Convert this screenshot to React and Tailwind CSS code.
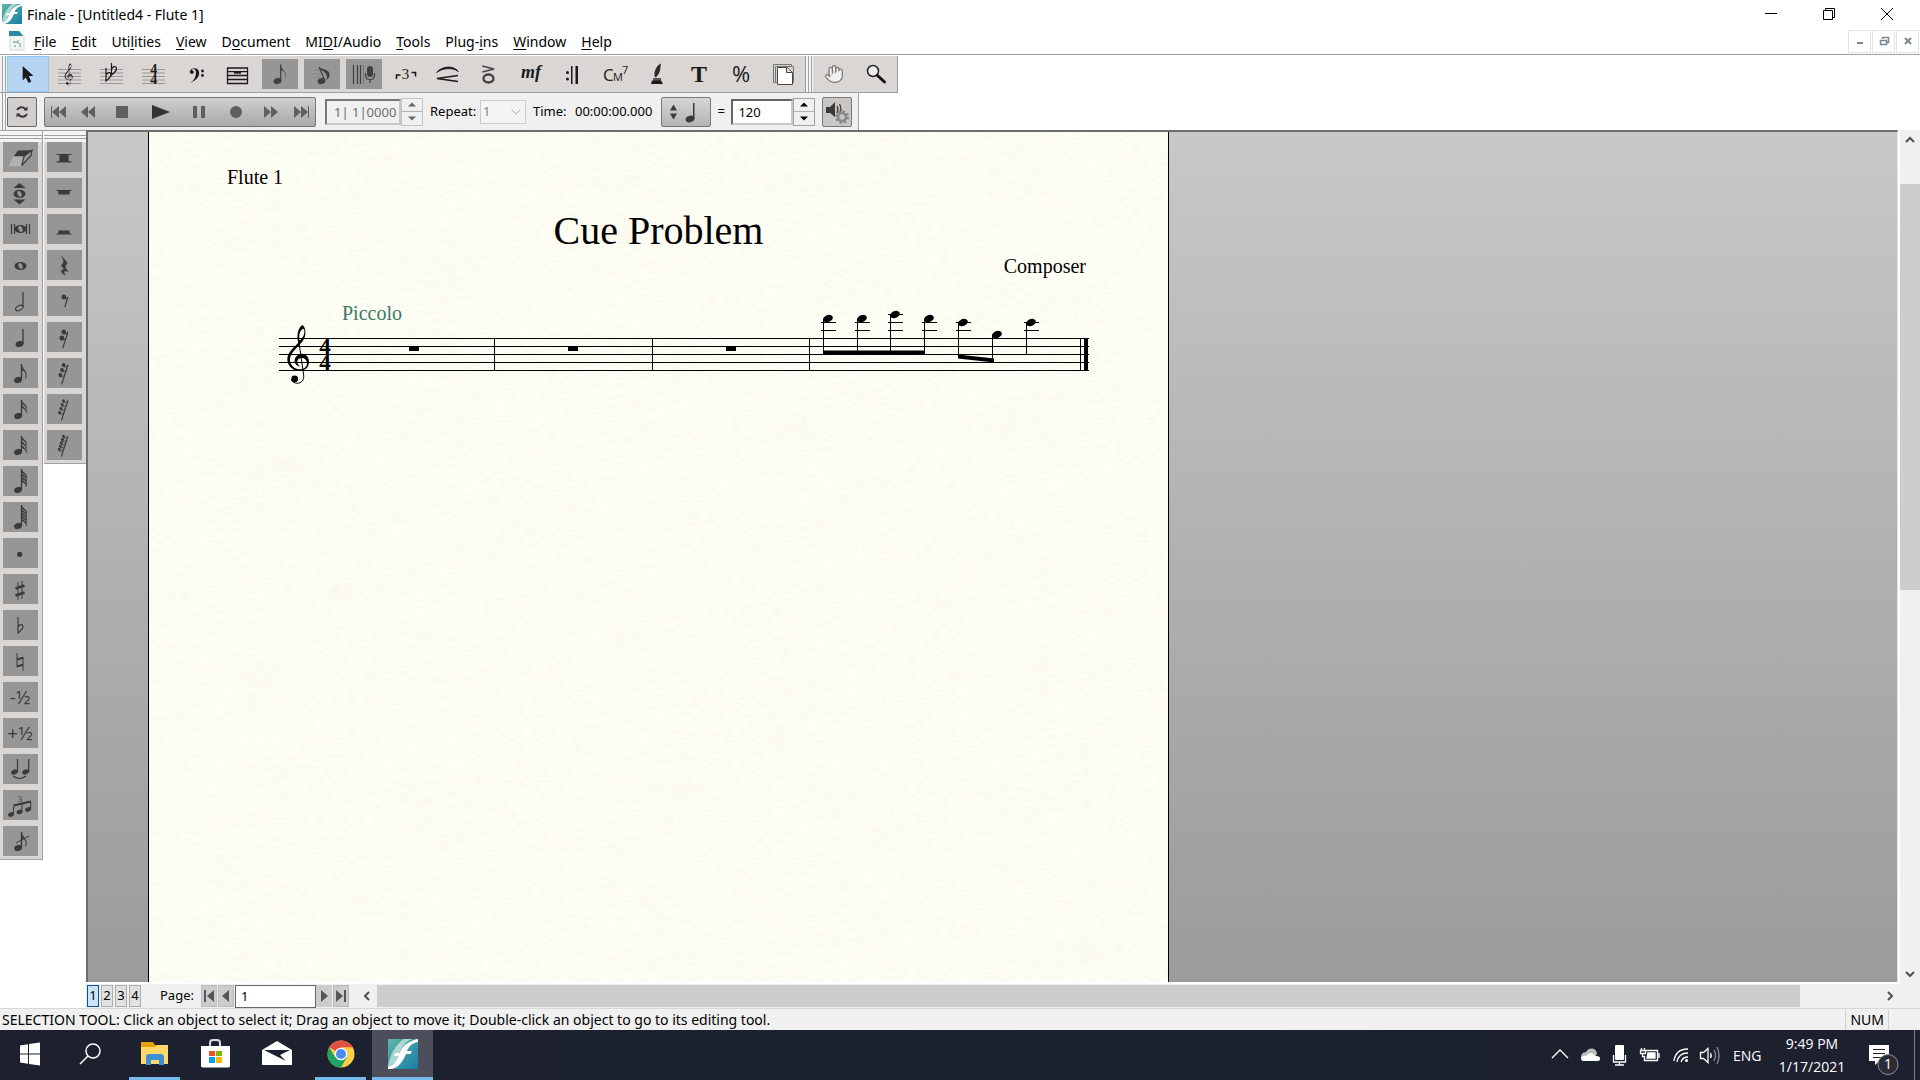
import React, { useState } from 'react';
import { Hand } from 'lucide-react';

const MENUS = [
  ['', 'F', 'ile'],
  ['', 'E', 'dit'],
  ['Uti', 'l', 'ities'],
  ['', 'V', 'iew'],
  ['D', 'o', 'cument'],
  ['MI', 'D', 'I/Audio'],
  ['', 'T', 'ools'],
  ['Plug-', 'i', 'ns'],
  ['', 'W', 'indow'],
  ['', 'H', 'elp'],
];

/* ---------- music symbols ---------- */

const Clef = ({ transform }) => (
  <g transform={transform}>
    <path
      fillRule="evenodd"
      fill="currentColor"
      d="M97 15C106 20 109 40 104 52C99 68 80 82 69 96C58 109 58 124 64 134C70 144 80 149 92 148C106 147 112 138 111 128C110 118 102 113 94 114C84 115 80 124 83 131C85 136 88 138 91 140C80 138 73 131 74 121C75 110 84 101 96 101C110 102 118 113 117 128C116 144 104 153 88 153C68 152 52 138 52 118C52 98 70 84 85 68C80 50 82 25 97 15ZM98 27C90 32 86 44 89 62C98 54 105 42 103 32C102 27 100 25 98 27Z"
    />
    <path d="M86 60L101 165C103 180 95 190 82 190C74 190 66 186 65 178" fill="none" stroke="currentColor" strokeWidth="3" />
    <circle cx="74" cy="177" r="10" fill="currentColor" />
  </g>
);

const Head = ({ x, y, rx = 4, ry = 3 }) => (
  <ellipse cx={x} cy={y} rx={rx} ry={ry} fill="currentColor" transform={`rotate(-20 ${x} ${y})`} />
);

const Whole = ({ x, y }) => (
  <g>
    <ellipse cx={x} cy={y} rx="6" ry="4" fill="currentColor" />
    <ellipse cx={x} cy={y} rx="2" ry="3" fill="#969696" transform={`rotate(-25 ${x} ${y})`} />
  </g>
);

const Flagged = ({ flags }) => {
  const top = flags > 3 ? 3 : 6;
  const step = flags > 3 ? 3 : 4;
  return (
    <g>
      <Head x={15} y={flags > 3 ? 24 : 22} />
      <path d={`M18.5 ${top}V${flags > 3 ? 24 : 22}`} stroke="currentColor" strokeWidth="1.3" />
      {[...Array(flags)].map((_, i) => (
        <path
          key={i}
          d={
            flags === 1
              ? 'M18.5 6C19 12 26 13 22.5 21C24 14 21 13 18.5 12Z'
              : `M18.5 ${top + i * step}c1 4 6 4 5 9c-1 -4 -3 -4 -5 -6Z`
          }
          fill="currentColor"
          stroke="currentColor"
          strokeWidth="0.4"
        />
      ))}
    </g>
  );
};

const HookRest = ({ hooks }) => {
  const top = hooks === 1 ? 11 : hooks === 2 ? 10 : 8 - hooks / 3;
  const step = hooks > 2 ? 18 / (hooks + 0.6) : 6;
  const r = hooks > 3 ? 1.5 : hooks === 3 ? 1.9 : 2.4;
  const end = hooks === 1 ? 21 : hooks === 2 ? 26 : 26.5;
  const slope = 0.33;
  return (
    <g stroke="currentColor" fill="none">
      <path d={`M21 ${top}L${21 - (end - top) * slope} ${end}`} strokeWidth="1.1" />
      {[...Array(hooks)].map((_, i) => {
        const y = top + i * step;
        const x = 21 - i * step * slope;
        return (
          <g key={i}>
            <circle cx={x - 5 + r / 3} cy={y} r={r} fill="currentColor" stroke="none" />
            <path d={`M${x - 5} ${y + 1.5}Q${x - 2} ${y + 3} ${x} ${y}`} strokeWidth="0.9" />
          </g>
        );
      })}
    </g>
  );
};

const FlatSign = ({ x, y, h = 16 }) => (
  <path
    d={`M${x} ${y}V${y + h}C${x + 4} ${y + h - 3} ${x + 6} ${y + h - 6} ${x + 4.5} ${y + h - 8}C${x + 3} ${y + h - 9} ${x + 1} ${y + h - 8} ${x} ${y + h - 6}`}
    fill="none"
    stroke="currentColor"
    strokeWidth="1.2"
  />
);

/* ---------- left palettes ---------- */

const NOTE_TOOLS = [
  ['Eraser', (
    <g>
      <path d="M6.5 23.7L10.7 14.3H21L18.7 23.7Z" fill="#b0b0b0" stroke="#bdbdbd" strokeWidth="0.6" />
      <path d="M15 8.5L29 8.2L21 14.3L10.7 14.3Z" fill="#3a3a3a" />
      <path d="M29 8.2L28 13.5L18.7 23.7L21 14.3Z" fill="#9a9a9a" stroke="#3a3a3a" strokeWidth="1.2" />
    </g>
  )],
  ['Change pitch', (
    <g>
      <path d="M16.5 5L22.5 10H10.5ZM10.5 21.5H22.5L16.5 26.5Z" fill="currentColor" />
      <Whole x={16.5} y={15.8} />
    </g>
  )],
  ['Double whole note', (
    <g>
      <path d="M8.5 10V20M11.5 10V20M23.5 10V20M26.5 10V20" stroke="currentColor" strokeWidth="1.2" />
      <Whole x={17.5} y={15} />
    </g>
  )],
  ['Whole note', <Whole x={17.5} y={16} />],
  ['Half note', (
    <g>
      <path d="M20 6V21" stroke="currentColor" strokeWidth="1.2" />
      <ellipse cx="16.3" cy="22" rx="4" ry="2.2" fill="none" stroke="currentColor" strokeWidth="1.1" transform="rotate(-28 16.3 22)" />
    </g>
  )],
  ['Quarter note', (
    <g>
      <path d="M20 7V22" stroke="currentColor" strokeWidth="1.3" />
      <Head x={16.5} y={22} />
    </g>
  )],
  ['Eighth note', <Flagged flags={1} />],
  ['16th note', <Flagged flags={2} />],
  ['32nd note', <Flagged flags={3} />],
  ['64th note', <Flagged flags={4} />],
  ['128th note', <Flagged flags={5} />],
  ['Dot', <circle cx="16.7" cy="16.3" r="2.6" fill="currentColor" />],
  ['Sharp', (
    <g stroke="currentColor">
      <path d="M15 8V26M19 7V25" strokeWidth="1" />
      <path d="M12.5 14.5L21.5 11.5M12.5 21.5L21.5 18.5" strokeWidth="2.4" />
    </g>
  )],
  ['Flat', <FlatSign x={15} y={7} h={16} />],
  ['Natural', (
    <g stroke="currentColor">
      <path d="M14 7V21M20 11V25" strokeWidth="1" />
      <path d="M14 13.5L20 11.8M14 20.5L20 18.8" strokeWidth="2.2" />
    </g>
  )],
  ['Half step down', <text x="17" y="22" textAnchor="middle" fontSize="19" fontFamily="Open Sans, sans-serif" fill="currentColor">-½</text>],
  ['Half step up', <text x="17" y="22" textAnchor="middle" fontSize="19" fontFamily="Open Sans, sans-serif" fill="currentColor">+½</text>],
  ['Tie', (
    <g>
      <Head x={11.5} y={18} rx={3.4} ry={2.5} />
      <Head x={22.5} y={18} rx={3.4} ry={2.5} />
      <path d="M14.5 5V18M25.7 5V18" stroke="currentColor" strokeWidth="1.2" />
      <path d="M10 22Q16.5 27 23 22" fill="none" stroke="currentColor" strokeWidth="1.2" />
    </g>
  )],
  ['Tuplet', (
    <g>
      <Head x={8} y={24.5} rx={3} ry={2.2} />
      <Head x={16.5} y={22} rx={3} ry={2.2} />
      <Head x={25} y={19.5} rx={3} ry={2.2} />
      <path d="M10.6 16V24M19 13.5V22M27.7 11V19" stroke="currentColor" strokeWidth="1" />
      <path d="M10.6 15.5L27.7 11.5" stroke="currentColor" strokeWidth="2" />
      <text x="17" y="11.5" textAnchor="middle" fontSize="9" fontFamily="Liberation Serif, serif" fill="currentColor">3</text>
    </g>
  )],
  ['Grace note', (
    <g>
      <Flagged flags={1} />
      <path d="M13 17L26 10" stroke="currentColor" strokeWidth="1" />
    </g>
  )],
];

const REST_TOOLS = [
  ['Double whole rest', <path d="M9.5 12.5H24.5M9.5 19.8H24.5M13 12.5H21V20H13Z" fill="currentColor" stroke="currentColor" strokeWidth="1.2" />],
  ['Whole rest', <path d="M9.5 12.5H24.5M12 12.5H22V16H12Z" fill="currentColor" stroke="currentColor" strokeWidth="1.2" />],
  ['Half rest', <path d="M9.5 20H24.5M12 17H22V20H12Z" fill="currentColor" stroke="currentColor" strokeWidth="1.2" />],
  ['Quarter rest', (
    <path d="M15 6.5L20.3 13C17.5 16 17.8 17.5 21 21.5C17 20 15.5 22 18.5 25C14 23.5 12.5 19.5 17.5 19.5L14.2 15.5C17.5 12.5 17 10.5 15 6.5Z" fill="currentColor" stroke="currentColor" strokeWidth="0.6" />
  )],
  ['Eighth rest', <HookRest hooks={1} />],
  ['16th rest', <HookRest hooks={2} />],
  ['32nd rest', <HookRest hooks={3} />],
  ['64th rest', <HookRest hooks={4} />],
  ['128th rest', <HookRest hooks={5} />],
];

const Palette = ({ tools, label }) => (
  <div className="flex w-[43px] shrink-0 flex-col border-r border-b border-[#a0a0a0] bg-[#dad6d3] pb-[3px]" aria-label={label} role="toolbar">
    <div className="flex h-[11px] flex-col justify-center gap-[2px] bg-[#f4f4f4]">
      <div className="h-px bg-[#a0a0a0]" />
      <div className="h-px bg-[#a0a0a0]" />
    </div>
    <div className="flex flex-col gap-[6px] px-[3px]">
      {tools.map(([name, icon]) => (
        <button key={name} aria-label={name} className="h-[30px] w-[35px] bg-[#969696] text-[#3a3a3a]">
          <svg width="35" height="30" viewBox="0 0 35 30">{icon}</svg>
        </button>
      ))}
    </div>
  </div>
);

/* ---------- main tool palette ---------- */

const StaffLines = () => (
  <path d="M9 13.5H32M9 17H32M9 20.5H32M9 24H32M9 27.5H32" stroke="#9a9896" strokeWidth="1" />
);

const MAIN_TOOLS = [
  ['Selection', <path d="M15.7 10V24.5L18.8 21.5L21.5 27L24.3 25.5L21.8 20.3L26.3 19.8Z" fill="#1a1a1a" />, 'selected'],
  ['Staff', <g><StaffLines /><Clef transform="translate(9.2 5.4) scale(0.124)" /></g>],
  ['Key signature', <g><StaffLines /><FlatSign x={15} y={12} h={13} /><FlatSign x={20.5} y={7} h={12} /></g>],
  ['Time signature', (
    <g fontFamily="Liberation Serif, serif" fontWeight="bold" fontSize="14" textAnchor="middle" fill="currentColor">
      <StaffLines />
      <text x="20.7" y="18">4</text>
      <text x="20.7" y="27.5">4</text>
    </g>
  )],
  ['Clef', (
    <g fill="currentColor">
      <path d="M15 27C22 24 25 20 24 15.5C23 11 16 11 14.8 15.5C14.5 18 18 19 18.7 16.5C19 14.5 17 14 16.5 14.5C18 11.8 21 13 21 16.5C21 21 19 24.5 15 27Z" />
      <circle cx="27.5" cy="15" r="1.4" />
      <circle cx="27.5" cy="19.5" r="1.4" />
    </g>
  )],
  ['Measure', (
    <g stroke="currentColor" fill="none">
      <path d="M10.5 12V27.5M30.5 12V27.5M10 12H31M10 15.7H31M10 19.5H31M10 23.5H31M10 27.5H31" strokeWidth="1.3" />
      <path d="M17 16.7H24" strokeWidth="2" />
    </g>
  )],
  ['Simple entry', (
    <g>
      <Head x={18.5} y={25} />
      <path d="M21.7 8.5V25" stroke="currentColor" strokeWidth="1.2" />
      <path d="M21.7 8.5C22 15 30 15 26 24C28 17 25 15 21.7 14Z" fill="currentColor" />
    </g>
  ), 'dark'],
  ['Speedy entry', (
    <g>
      <path d="M12 14.5H18M11 18H20M12 21.5H19" stroke="#878787" strokeWidth="1" />
      <Head x={20.5} y={25} />
      <path d="M23.7 24L18 11" stroke="currentColor" strokeWidth="1.2" />
      <path d="M18 11C22 14 28 13 28.500 18C29 21 27 23 25.500 24C27 20 25 16 19.500 14Z" fill="currentColor" />
    </g>
  ), 'dark'],
  ['HyperScribe', (
    <g>
      <path d="M10.5 9V28M14.5 9V28M17.5 9V28" stroke="currentColor" strokeWidth="1.2" />
      <path d="M20.5 9V28" stroke="#777" strokeWidth="1" />
      <rect x="24" y="10" width="6" height="11" rx="3" fill="currentColor" />
      <path d="M22.5 17V19C22.5 25 31.5 25 31.5 19V17M27 23V27" fill="none" stroke="currentColor" strokeWidth="1.2" />
    </g>
  ), 'dark'],
  ['Tuplet', (
    <g>
      <path d="M11.5 23V19H15.5M26.5 16.5H30.5V20.5" fill="none" stroke="currentColor" strokeWidth="1.6" />
      <text x="20.5" y="23" textAnchor="middle" fontSize="15" fontFamily="Liberation Serif, serif" fill="currentColor">3</text>
    </g>
  )],
  ['Smart shape', (
    <g fill="none" stroke="currentColor">
      <path d="M9.7 16.5C15 10 26 9 31.3 15.5C26 11 15 12 9.7 16.5Z" fill="currentColor" />
      <path d="M31 19.5L10 22.5L31 25.5" strokeWidth="1.5" />
    </g>
  )],
  ['Articulation', (
    <g fill="none" stroke="#444">
      <path d="M13.3 10L25 13L13.3 16" strokeWidth="1.5" />
      <ellipse cx="19.5" cy="22.5" rx="5" ry="4" strokeWidth="2.4" />
    </g>
  )],
  ['Expression', <text x="20" y="22" textAnchor="middle" fontSize="18" fontStyle="italic" fontWeight="bold" fontFamily="Liberation Serif, serif" fill="currentColor">mf</text>],
  ['Repeat', (
    <g fill="currentColor">
      <circle cx="14.5" cy="16.5" r="1.5" />
      <circle cx="14.5" cy="23" r="1.5" />
      <path d="M18 10H19.5V28H18ZM22.5 10H25V28H22.5Z" />
    </g>
  )],
  ['Chord', (
    <g fontFamily="Open Sans, sans-serif" fill="currentColor">
      <text x="8" y="25" fontSize="17">C</text>
      <text x="18" y="25" fontSize="11">M</text>
      <text x="27" y="18" fontSize="11">7</text>
    </g>
  )],
  ['Lyrics', (
    <g fill="currentColor">
      <path d="M18 21C16 16 20 9 24 7.5C23 12 24 14 21.5 18L19 21.5Z" fill="#2b2b2b" />
      <path d="M16 22H24V25H16Z" fill="#555" />
      <path d="M15 24.5H24L26 28H14Z" />
    </g>
  )],
  ['Text', <text x="20" y="26" textAnchor="middle" fontSize="24" fontWeight="bold" fontFamily="Liberation Serif, serif" fill="currentColor">T</text>],
  ['Resize', <text x="20" y="26" textAnchor="middle" fontSize="22" fontFamily="Open Sans, sans-serif" fill="currentColor">%</text>],
  ['Page layout', (
    <g fill="#d5d1cd" stroke="#444" strokeWidth="1">
      <path d="M10.5 8.5H28.5V26.5H10.5Z" stroke="#777" />
      <path d="M12.5 10.5H30.5V26.5H12.5Z" stroke="#777" />
      <path d="M14.5 11.5H24L29.5 16.5V28.5H14.5Z" fill="#fff" />
      <path d="M23.5 11.5V16.5H29" fill="#ddd" />
    </g>
  )],
];

const NAV_TOOLS = [
  ['Hand grabber', <Hand x={11} y={8} width={20} height={20} strokeWidth={1.5} color="#777" fill="#f0f0f0" />],
  ['Zoom', (
    <g>
      <circle cx="18" cy="15" r="5.5" fill="#eee" stroke="#222" strokeWidth="1.5" />
      <path d="M22.5 19.5L29.5 26" stroke="#111" strokeWidth="3" strokeLinecap="round" />
    </g>
  )],
];

const Grip = () => (
  <div className="flex w-[7px] shrink-0 gap-[2px] bg-[#f4f4f4] pl-[2px]">
    <div className="w-px bg-[#a0a0a0]" />
    <div className="w-px bg-[#a0a0a0]" />
  </div>
);

const ToolStrip = ({ tools, label }) => (
  <div className="flex border-r border-b border-[#a0a0a0] bg-[#dad6d3]" role="toolbar" aria-label={label}>
    <Grip />
    {tools.map(([name, icon, state]) => (
      <button
        key={name}
        aria-label={name}
        className={
          state === 'selected'
            ? 'relative h-9 w-[42px] bg-[#b6d5f3] text-[#1a1a1a] outline outline-1 -outline-offset-1 outline-[#90c8f6]'
            : 'relative h-9 w-[42px] text-[#1a1a1a]'
        }
      >
        {state === 'dark' && <span className="absolute inset-x-[3px] inset-y-[3px] bg-[#969696]" />}
        <svg width="42" height="36" viewBox="0 0 42 36" className={state === 'dark' ? 'relative text-[#3f3f3f]' : 'relative'}>
          {icon}
        </svg>
      </button>
    ))}
  </div>
);

/* ---------- playback ---------- */

const TRANSPORT = [
  ['Rewind to start', 27, 'M-8 -6H-7V6H-8ZM-7 0L0 -6V6ZM0 0L7 -6V6Z'],
  ['Rewind', 31, 'M7 -6V6L0 0ZM0 -6V6L-7 0Z'],
  ['Stop', 38, 'M-6 -6H6V6H-6Z'],
  ['Play', 40, 'M-9 -7L9 0L-9 7Z'],
  ['Pause', 35, 'M-6 -6H-2V6H-6ZM2 -6H6V6H2Z'],
  ['Record', 40, 'M-6 0A6 6 0 1 0 6 0A6 6 0 1 0 -6 0Z'],
  ['Fast forward', 30, 'M-7 -6V6L0 0ZM0 -6V6L7 0Z'],
  ['Forward to end', 29, 'M7 -6H8V6H7ZM7 0L0 -6V6ZM0 0L-7 -6V6Z'],
];

const Spinner = ({ label, muted }) => (
  <div className={muted ? 'flex h-[28px] w-[22px] flex-col border border-[#c4c4c4] bg-[#f0f0f0] text-[#666]' : 'flex h-[28px] w-[22px] flex-col border border-[#a0a0a0] bg-[#f0f0f0] text-black'}>
    <button aria-label={`${label} up`} className="flex flex-1 items-center justify-center border-b border-[#b0b0b0]">
      <svg width="8" height="5" viewBox="0 0 8 5"><path d="M0 4.5H8L4 0.5Z" fill="currentColor" /></svg>
    </button>
    <button aria-label={`${label} down`} className="flex flex-1 items-center justify-center">
      <svg width="8" height="5" viewBox="0 0 8 5"><path d="M0 0.5H8L4 4.5Z" fill="currentColor" /></svg>
    </button>
  </div>
);

const PlaybackBar = () => {
  const [tempo, setTempo] = useState('120');
  return (
    <div className="flex h-[37px] w-fit items-center border-r border-[#a0a0a0] bg-[#f0f0f0] pr-[6px] font-['Noto_Sans',sans-serif] text-[13px] text-black">
      <div className="flex h-full"><Grip /></div>
      <button aria-label="Loop" className="flex h-[30px] w-[30px] items-center justify-center rounded-[2px] border border-[#666] bg-[#d2cecb]">
        <svg width="14" height="14" viewBox="0 0 14 14" fill="none" stroke="#333" strokeWidth="2">
          <path d="M2 5C4 1.5 8 1.5 10.5 4M12 9C10 12.5 6 12.5 3.5 10" />
          <path d="M8.5 5.5H12.5V1.5ZM5.5 8.5H1.5V12.5Z" fill="#333" stroke="none" />
        </svg>
      </button>
      <div className="ml-[7px] flex h-[30px] rounded-[2px] border border-[#777] bg-gradient-to-b from-[#cfcfcf] to-[#a8a8a8]">
        {TRANSPORT.map(([name, w, d]) => (
          <button key={name} aria-label={name} style={{ width: w }} className="flex items-center justify-center">
            <svg width="20" height="16" viewBox="-10 -8 20 16">
              <path d={d} fill={name === 'Play' ? '#333' : '#5f5f5f'} />
            </svg>
          </button>
        ))}
      </div>
      <input
        aria-label="Position"
        readOnly
        value="1| 1|0000"
        className="ml-[9px] h-[26px] w-[76px] border-2 border-[#c8c8c8] border-t-[#777] border-l-[#777] bg-[#f0f0f0] pl-[7px] text-[13px] text-[#6d6d6d]"
      />
      <div className="flex"><Spinner label="Position" muted /></div>
      <label htmlFor="repeat" className="ml-[7px] w-[50px]">Repeat:</label>
      <div className="relative">
        <select id="repeat" disabled className="h-[24px] w-[46px] appearance-none border border-[#ccc] bg-[#f4f4f4] pl-[2px] text-[13px] text-[#838383]">
          <option>1</option>
        </select>
        <svg className="pointer-events-none absolute top-[9px] right-[5px]" width="10" height="6" viewBox="0 0 10 6">
          <path d="M0.5 0.5L5 5L9.5 0.5" fill="none" stroke="#aaa" />
        </svg>
      </div>
      <span className="ml-[7px] w-[42px]">Time:</span>
      <output>00:00:00.000</output>
      <button aria-label="Tempo unit" className="ml-[9px] flex h-[30px] w-[50px] items-center justify-center rounded-[2px] border border-[#777] bg-gradient-to-b from-[#d6d6d6] to-[#b4b4b4]">
        <svg width="40" height="26" viewBox="0 0 40 26" fill="#3a3a3a">
          <path d="M4 11.5H11L7.5 5.5ZM4 14.5H11L7.5 20.5Z" />
          <ellipse cx="24" cy="20" rx="4.5" ry="3.3" transform="rotate(-20 24 20)" />
          <path d="M27 4H28.5V20H27Z" />
        </svg>
      </button>
      <label htmlFor="tempo" className="ml-[6px] w-[14px]">=</label>
      <input
        id="tempo"
        value={tempo}
        onChange={(e) => setTempo(e.target.value)}
        className="h-[26px] w-[62px] border-2 border-[#c8c8c8] border-t-[#666] border-l-[#666] bg-white pl-[5px] text-[13px]"
      />
      <Spinner label="Tempo" />
      <button aria-label="Playback settings" className="ml-[7px] flex h-[30px] w-[30px] items-center justify-center rounded-[2px] border border-[#777] bg-[#c9c6c4]">
        <svg width="26" height="26" viewBox="0 0 26 26">
          <path d="M2 8H6L11 3V18L6 14H2Z" fill="#3a3a3a" />
          <path d="M13 7Q15 10.5 13 14M15.5 5Q18 10 16 14" fill="none" stroke="#3a3a3a" strokeWidth="1.3" />
          <circle cx="18" cy="18" r="4" fill="none" stroke="#8a8a8a" strokeWidth="2.6" />
          <circle cx="18" cy="18" r="6" fill="none" stroke="#8a8a8a" strokeWidth="2" strokeDasharray="2.4 2.3" />
        </svg>
      </button>
    </div>
  );
};

/* ---------- score ---------- */

const NOTES = [
  { x: 828, y: 318.5, end: 354, ledgers: [322.5, 330.5] },
  { x: 862, y: 318.5, end: 354, ledgers: [322.5, 330.5] },
  { x: 895, y: 314.5, end: 354, ledgers: [314.5, 322.5, 330.5] },
  { x: 929, y: 318.5, end: 354, ledgers: [322.5, 330.5] },
  { x: 963, y: 322.5, end: 357, ledgers: [322.5, 330.5] },
  { x: 997, y: 334.5, end: 361, ledgers: [] },
  { x: 1031, y: 322.5, end: 354, ledgers: [322.5, 330.5] },
];

const Score = () => (
  <svg className="mt-[22px] ml-[43px] block text-black" width="830" height="90" viewBox="270 300 830 90" aria-label="Flute 1 staff">
    <text x="342" y="320" fontSize="20" fontFamily="Liberation Serif, serif" fill="#3a7864">Piccolo</text>
    {[338.5, 346.5, 354.5, 362.5, 370.5].map((y) => (
      <path key={y} d={`M279 ${y}H1089`} stroke="currentColor" />
    ))}
    {[494.5, 652.5, 809.5, 1080.5].map((x) => (
      <path key={x} d={`M${x} 338V371`} stroke="currentColor" />
    ))}
    <rect x="1084" y="338" width="4" height="33" fill="currentColor" />
    <Clef transform="translate(270 320) scale(0.333)" />
    <g fontFamily="Liberation Serif, serif" fontWeight="bold" fontSize="23" textAnchor="middle">
      <text x="325" y="354">4</text>
      <text x="325" y="370">4</text>
    </g>
    {[409, 568, 726].map((x) => (
      <rect key={x} x={x} y="347" width="10" height="4" fill="currentColor" />
    ))}
    {NOTES.map((n) => (
      <g key={n.x}>
        <Head x={n.x} y={n.y} rx={5} ry={3.5} />
        <path d={`M${n.x - 4.5} ${n.y}V${n.end}`} stroke="currentColor" />
        {n.ledgers.map((y) => (
          <path key={y} d={`M${n.x - 7} ${y}H${n.x + 8}`} stroke="currentColor" />
        ))}
      </g>
    ))}
    <path d="M823 350.5H925V354.5H823ZM958 354.5L994 358.5V362.5L958 358.5Z" fill="currentColor" />
  </svg>
);

const PaperGrain = () => (
  <svg className="pointer-events-none absolute inset-0 h-full w-full" aria-hidden="true">
    <filter id="grain" x="0" y="0" width="100%" height="100%">
      <feTurbulence type="fractalNoise" baseFrequency="0.12 0.35" numOctaves="3" seed="4" />
      <feColorMatrix values="0 0 0 0 0.6  0 0 0 0 0.57  0 0 0 0 0.3  0.16 0 0 0 -0.04" />
    </filter>
    <filter id="stain" x="0" y="0" width="100%" height="100%">
      <feTurbulence type="fractalNoise" baseFrequency="0.012 0.025" numOctaves="2" seed="9" />
      <feColorMatrix values="0 0 0 0 0.8  0 0 0 0 0.75  0 0 0 0 0.4  0.14 0 0 0 -0.055" />
    </filter>
    <rect width="100%" height="100%" filter="url(#grain)" />
    <rect width="100%" height="100%" filter="url(#stain)" />
  </svg>
);

const Canvas = () => (
  <main className="mb-[2px] min-w-0 flex-1 overflow-hidden border-t-2 border-r border-l-2 border-[#6d6d6d] border-r-[#e3e3e3] bg-gradient-to-b from-[#c9c7c8] to-[#9b9b9b] pl-[60px]">
    <article className="relative h-full w-[1021px] border-x border-black bg-[#fffff8] pt-[33px] font-['Liberation_Serif',serif] text-black">
      <PaperGrain />
      <div className="relative pl-[78px]">
        <p className="text-[20px] leading-[24px]">Flute 1</p>
        <h1 className="mt-5 mr-[78px] text-center text-[40px] leading-[44px]">Cue Problem</h1>
        <p className="mt-px pr-[82px] text-right text-[20px] leading-[24px]">Composer</p>
        <Score />
      </div>
    </article>
  </main>
);

const Chevron = ({ d, label }) => (
  <button aria-label={label} className="flex h-5 w-5 shrink-0 items-center justify-center">
    <svg width="10" height="10" viewBox="0 0 10 10"><path d={d} fill="none" stroke="#505050" strokeWidth="2" /></svg>
  </button>
);

const PageBar = () => (
  <div className="flex h-[24px] items-center bg-[#f0f0f0] font-['Noto_Sans',sans-serif] text-[13px] text-black">
    <div className="flex gap-[2px] pl-px">
      {[1, 2, 3, 4].map((n) => (
        <button
          key={n}
          className={n === 1 ? 'h-[22px] w-[12px] border border-[#005499] bg-[#cce4f7] text-center' : 'h-[22px] w-[12px] border border-[#adadad] bg-[#e1e1e1] text-center'}
        >
          {n}
        </button>
      ))}
    </div>
    <label htmlFor="page" className="ml-[19px] w-[41px]">Page:</label>
    <button aria-label="First page" className="flex h-[22px] w-4 items-center justify-center border border-[#bbb] bg-[#ccc]">
      <svg width="10" height="14" viewBox="0 0 10 14" fill="#555"><path d="M0 1H2V13H0ZM10 1V13L3 7Z" /></svg>
    </button>
    <button aria-label="Previous page" className="ml-px flex h-[22px] w-4 items-center justify-center border border-[#bbb] bg-[#ccc]">
      <svg width="8" height="14" viewBox="0 0 8 14" fill="#555"><path d="M7 1V13L0 7Z" /></svg>
    </button>
    <input id="page" defaultValue="1" className="ml-px h-[23px] w-[81px] border border-[#666] bg-white pl-[5px] text-[13px]" />
    <button aria-label="Next page" className="flex h-[22px] w-4 items-center justify-center border border-[#ccc] bg-[#ccc]">
      <svg width="8" height="14" viewBox="0 0 8 14" fill="#555"><path d="M1 1V13L8 7Z" /></svg>
    </button>
    <button aria-label="Last page" className="ml-px flex h-[22px] w-4 items-center justify-center border border-[#bbb] bg-[#ccc]">
      <svg width="10" height="14" viewBox="0 0 10 14" fill="#555"><path d="M8 1H10V13H8ZM0 1V13L7 7Z" /></svg>
    </button>
    <div className="ml-[8px] flex min-w-0 flex-1 items-center pr-[20px]">
      <Chevron label="Scroll left" d="M7 1L3 5L7 9" />
      <div className="h-[22px] flex-1 pr-[80px]"><div className="h-full bg-[#cdcdcd]" /></div>
      <Chevron label="Scroll right" d="M3 1L7 5L3 9" />
    </div>
  </div>
);

/* ---------- windows shell ---------- */

const FinaleIcon = ({ size }) => (
  <svg width={size} height={size} viewBox="0 0 30 30">
    <defs>
      <linearGradient id="teal" x1="0" y1="0" x2="1" y2="1">
        <stop offset="0" stopColor="#5fb5a8" />
        <stop offset="1" stopColor="#157fa6" />
      </linearGradient>
    </defs>
    <rect width="30" height="30" fill="url(#teal)" />
    <path d="M0 27C3 14 7 6 16 0H24C15 4 13 10 10 17C8 23 5 28 0 30Z" fill="#cfe8df" opacity="0.75" />
    <path d="M0 30V28C7 27 9 20 12 13C15 6 21 2 30 0V3C24 4 21 7 19 12H24L22.5 15H18C14 24 10 29 3 30Z" fill="#fff" />
    <path d="M7 14H15L14 17H6Z" fill="#fff" />
  </svg>
);

const DocIcon = () => (
  <svg width="16" height="20" viewBox="0 0 16 20">
    <path d="M1 1H11L15 5V19H1Z" fill="#f2f5f6" stroke="#c6ced2" strokeWidth="0.8" />
    <path d="M0 0H10L14 5H0Z" fill="#2a8aa5" />
    <path d="M4 11H8M9 9V13M5 15H7M11 12V16" stroke="#9aa5ac" strokeWidth="1.3" />
  </svg>
);

const TASKS = [
  ['Start', 'w-[60px]', 'border-transparent', (
    <path d="M5 6.5L13 5.3V14.5H5ZM14 5.1L25 3.5V14.5H14ZM5 15.5H13V24.7L5 23.5ZM14 15.5H25V26.5L14 24.9Z" fill="#fff" />
  )],
  ['Search', 'w-[60px]', 'border-transparent', (
    <g fill="none" stroke="#fff" strokeWidth="1.5"><circle cx="18" cy="12" r="7" /><path d="M13 17L5 25" /></g>
  )],
  ['File Explorer', 'ml-[9px] w-[51px]', 'border-[#76b9ed]', (
    <g>
      <path d="M1 3H13L15 6H28V11H1Z" fill="#e5a100" />
      <path d="M1 8H15L17 6H28V25H1Z" fill="#ffd869" />
      <path d="M6 26V18Q6 15 9 15H21Q24 15 24 18V26H19V21H11V26Z" fill="#3b91d6" />
    </g>
  )],
  ['Microsoft Store', 'ml-[4px] w-[61px]', 'border-transparent', (
    <g>
      <path d="M10 8V4Q10 1 13 1H17Q20 1 20 4V8" fill="none" stroke="#ddd" strokeWidth="2" />
      <path d="M1 7H30V27Q30 28.5 28 28.5H3Q1 28.5 1 27Z" fill="#fff" />
      <path d="M9 12H15V17H9Z" fill="#f25022" />
      <path d="M16 12H22V17H16Z" fill="#7fba00" />
      <path d="M9 18H15V24H9Z" fill="#00a4ef" />
      <path d="M16 18H22V24H16Z" fill="#ffb900" />
    </g>
  )],
  ['Mail', 'w-[64px]', 'border-transparent', (
    <g>
      <path d="M0 11L15 2L30 11V26H0Z" fill="#fff" />
      <path d="M2 11H28L18 16L24 22Z" fill="#1d202e" />
    </g>
  )],
  ['Chrome', 'ml-[6px] w-[51px]', 'border-[#76b9ed]', (
    <g>
      <circle cx="15" cy="15" r="13.5" fill="#ffcd46" />
      <path d="M15 15L3.3 8.3A13.5 13.5 0 0 1 26.7 8.3H15Z" fill="#dd5144" />
      <path d="M3.3 8.3A13.5 13.5 0 0 0 15 28.5L21 18L9 18Z" fill="#1da462" />
      <circle cx="15" cy="15" r="6.3" fill="#fff" />
      <circle cx="15" cy="15" r="5" fill="#4c8bf5" />
    </g>
  )],
];

const Tray = () => (
  <div className="ml-auto flex items-center font-['Open_Sans',sans-serif] text-white">
    <svg width="183" height="30" viewBox="1550 1040 183 30" fill="none" stroke="#fff" strokeWidth="1.3">
      <path d="M1552 1058L1560 1050L1568 1058" />
      <g stroke="none">
        <path d="M1582 1061C1579 1055 1583 1052 1586 1052C1589 1046 1597 1048 1597 1054L1592 1061Z" fill="#bbb" />
        <path d="M1584 1061C1579 1060 1581 1055 1586 1056C1589 1052 1594 1053 1595 1056C1601 1055 1602 1061 1597 1061Z" fill="#fff" />
        <rect x="1615" y="1045" width="9" height="15" rx="1" fill="#fff" />
      </g>
      <path d="M1613.5 1055V1062H1625.5V1055M1619.5 1062V1065M1615 1065H1624" />
      <path d="M1646 1050.5H1657.5V1060.5H1644.5V1056M1659 1053V1058M1641.5 1048V1050M1644.5 1048V1050M1640.5 1050.5H1645.5V1053.5H1640.5ZM1642.5 1053V1056.5H1645" />
      <path d="M1648 1053H1655V1058H1647Z" fill="#fff" />
      <path d="M1674 1061C1675 1053 1680 1049 1688 1049M1677 1062C1678 1056 1682 1053 1688 1053M1681 1062C1682 1059 1684 1057 1688 1057" />
      <circle cx="1686.5" cy="1060.5" r="1.5" fill="#fff" stroke="none" />
      <path d="M1700.5 1052.5H1703.5L1708 1048.5V1062.5L1703.5 1058.5H1700.5ZM1710.5 1053Q1712 1055.5 1710.5 1058" />
      <path d="M1714 1050Q1717 1055.5 1714 1061M1717 1047Q1721 1055.5 1717 1064" stroke="#8a8c94" />
    </svg>
    <span className="w-[35px] text-[14px]">ENG</span>
    <time className="w-[88px] text-center text-[14px] leading-[23px]">
      9:49 PM
      <br />
      1/17/2021
    </time>
    <button aria-label="Notifications" className="relative ml-[12px] h-[50px] w-[46px]">
      <svg width="46" height="50" viewBox="0 0 46 50">
        <path d="M1 15H21V31H11L7 35V31H1Z" fill="#fff" />
        <path d="M5 19.5H17M5 23.5H17M5 27.5H14" stroke="#1d202e" strokeWidth="1.2" />
        <circle cx="20" cy="34.5" r="10" fill="#2b2d33" stroke="#8d8f95" />
      </svg>
      <span className="absolute top-[24px] left-[10px] w-5 text-center text-[14px] leading-[20px]">1</span>
    </button>
    <div className="h-[50px] w-[6px] border-l border-[#777a82]" />
  </div>
);

const Taskbar = () => (
  <footer className="flex h-[50px] shrink-0 bg-gradient-to-r from-[#1e2030] via-[#1c222e] to-[#1d202e]">
    {TASKS.map(([name, width, underline, icon]) => (
      <div key={name} className={`flex ${width}`}>
        <button aria-label={name} className={`flex h-full w-full items-center justify-center border-b-[3px] ${underline}`}>
          <svg width="30" height="30" viewBox="0 0 30 30">{icon}</svg>
        </button>
      </div>
    ))}
    <button aria-label="Finale" className="ml-[6px] flex w-[61px] items-center justify-center border-b-[3px] border-[#76b9ed] bg-[#4c4e5b]">
      <FinaleIcon size={30} />
    </button>
    <Tray />
  </footer>
);

const App = () => (
  <div className="flex h-screen flex-col overflow-hidden bg-white font-['Noto_Sans',sans-serif] text-[14px] text-black">
    <header className="flex h-[28px] shrink-0 items-center pl-[2px]">
      <FinaleIcon size={20} />
      <span className="ml-[5px]">Finale - [Untitled4 - Flute 1]</span>
      <div className="ml-auto flex pr-[4px]">
        <button aria-label="Minimize" className="flex w-[58px] justify-center">
          <svg width="12" height="12" viewBox="0 0 12 12"><path d="M0 5.5H12" stroke="#000" /></svg>
        </button>
        <button aria-label="Restore" className="flex w-[58px] justify-center">
          <svg width="12" height="12" viewBox="0 0 12 12" fill="none" stroke="#000"><path d="M0.5 2.5H9.5V11.5H0.5ZM2.5 2V0.5H11.5V9.5H10" /></svg>
        </button>
        <button aria-label="Close" className="flex w-[58px] justify-center">
          <svg width="12" height="12" viewBox="0 0 12 12"><path d="M0 0L12 12M12 0L0 12" stroke="#000" /></svg>
        </button>
      </div>
    </header>

    <nav className="flex h-[27px] shrink-0 items-center border-b border-[#a0a0a0] pl-[9px]">
      <DocIcon />
      <div className="ml-[2px] flex">
        {MENUS.map(([pre, key, post]) => (
          <button key={pre + key + post} className="pr-[8px] pl-[7px]">
            {pre}
            <u className="underline-offset-2">{key}</u>
            {post}
          </button>
        ))}
      </div>
      <div className="ml-auto flex gap-px pr-px">
        {[
          ['Minimize document', 'M3 8H9', 2],
          ['Restore document', 'M4.5 4V2.5H10.5V7.5H9M2.5 5.5H8.5V9.5H2.5Z', 1.5],
          ['Close document', 'M3 3L9 9M9 3L3 9', 2],
        ].map(([name, d, stroke]) => (
          <button key={name} aria-label={name} className="flex h-[23px] w-[23px] items-center justify-center border border-[#e3e3e3]">
            <svg width="12" height="12" viewBox="0 0 12 12"><path d={d} fill="none" stroke="#7a8794" strokeWidth={stroke} /></svg>
          </button>
        ))}
      </div>
    </nav>

    <div className="flex h-[38px] shrink-0 pt-px">
      <ToolStrip tools={MAIN_TOOLS} label="Main tool palette" />
      <ToolStrip tools={NAV_TOOLS} label="Navigational tools" />
    </div>
    <PlaybackBar />

    <div className="flex min-h-0 flex-1">
      <div className="flex w-[86px] shrink-0 items-start gap-px border-t border-[#a0a0a0]">
        <Palette tools={NOTE_TOOLS} label="Simple entry palette" />
        <Palette tools={REST_TOOLS} label="Simple entry rests palette" />
      </div>
      <div className="flex min-w-0 flex-1 flex-col">
        <div className="flex min-h-0 flex-1">
          <Canvas />
          <div className="ml-[2px] flex w-5 shrink-0 flex-col bg-[#f0f0f0]">
            <Chevron label="Scroll up" d="M1 7L5 3L9 7" />
            <div className="flex flex-1 flex-col pt-[34px]"><div className="h-[52%] bg-[#cdcdcd]" /></div>
            <Chevron label="Scroll down" d="M1 3L5 7L9 3" />
          </div>
        </div>
        <PageBar />
      </div>
    </div>

    <div className="flex h-[22px] shrink-0 items-center border-t border-[#d7d7d7] bg-[#f0f0f0] pl-[2px]">
      <span>SELECTION TOOL: Click an object to select it; Drag an object to move it; Double-click an object to go to its editing tool.</span>
      <span className="mr-[31px] ml-auto border-x border-[#d0d0d0] px-[4px] leading-[20px]">NUM</span>
    </div>
    <Taskbar />
  </div>
);

export default App;
